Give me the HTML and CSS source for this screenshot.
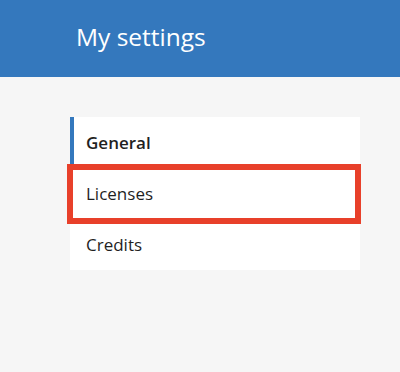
FILE: index.html
```html
<!DOCTYPE html>
<html lang="en">
<head>
    <meta charset="UTF-8">
    <meta name="viewport" content="width=device-width, initial-scale=1.0">
    <title>My settings</title>
    <link rel="stylesheet" href="styles.css">
</head>
<body>
    <!-- 顶部标题栏 -->
    <header class="top-bar">
        <h1 class="title">My settings</h1>
    </header>
    <!-- 设置菜单 -->
    <div class="content">
        <ul class="menu">
            <li class="menu-item current">General</li>
            <li class="menu-item marked">Licenses</li>
            <li class="menu-item">Credits</li>
        </ul>
    </div>
</body>
</html>
```

FILE: styles.css
```css
/* 清除默认样式 */
*{
    margin: 0;
    padding: 0;
    box-sizing: border-box;
}

ul{
    list-style: none;
}

body{
    background-color: #f6f6f6;
    font-family: "Open Sans", Lato, sans-serif;
    color: #1f1f1f;
}

.top-bar{
    height: 77px;
    background-color: #3478bd;
    padding-left: 76px;
    display: flex;
    align-items: center;
}

.title{
    font-size: 24.5px;
    font-weight: 400;
    color: #fff;
    margin-top: -4px;
}

.content{
    padding: 40px 0 0 70px;
}

.menu{
    width: 290px;
    background-color: #fff;
}

.menu-item{
    position: relative;
    height: 51px;
    line-height: 51px;
    padding-left: 16px;
    font-size: 17px;
}

.menu-item.current{
    font-weight: 600;
    border-left: 4px solid #3478bd;
    padding-left: 12px;
}

/* 红色标注框 */
.menu-item.marked::after{
    content: "";
    position: absolute;
    left: -3px;
    right: -1px;
    top: -4px;
    bottom: -5px;
    border: 6px solid #e8402a;
}
```
